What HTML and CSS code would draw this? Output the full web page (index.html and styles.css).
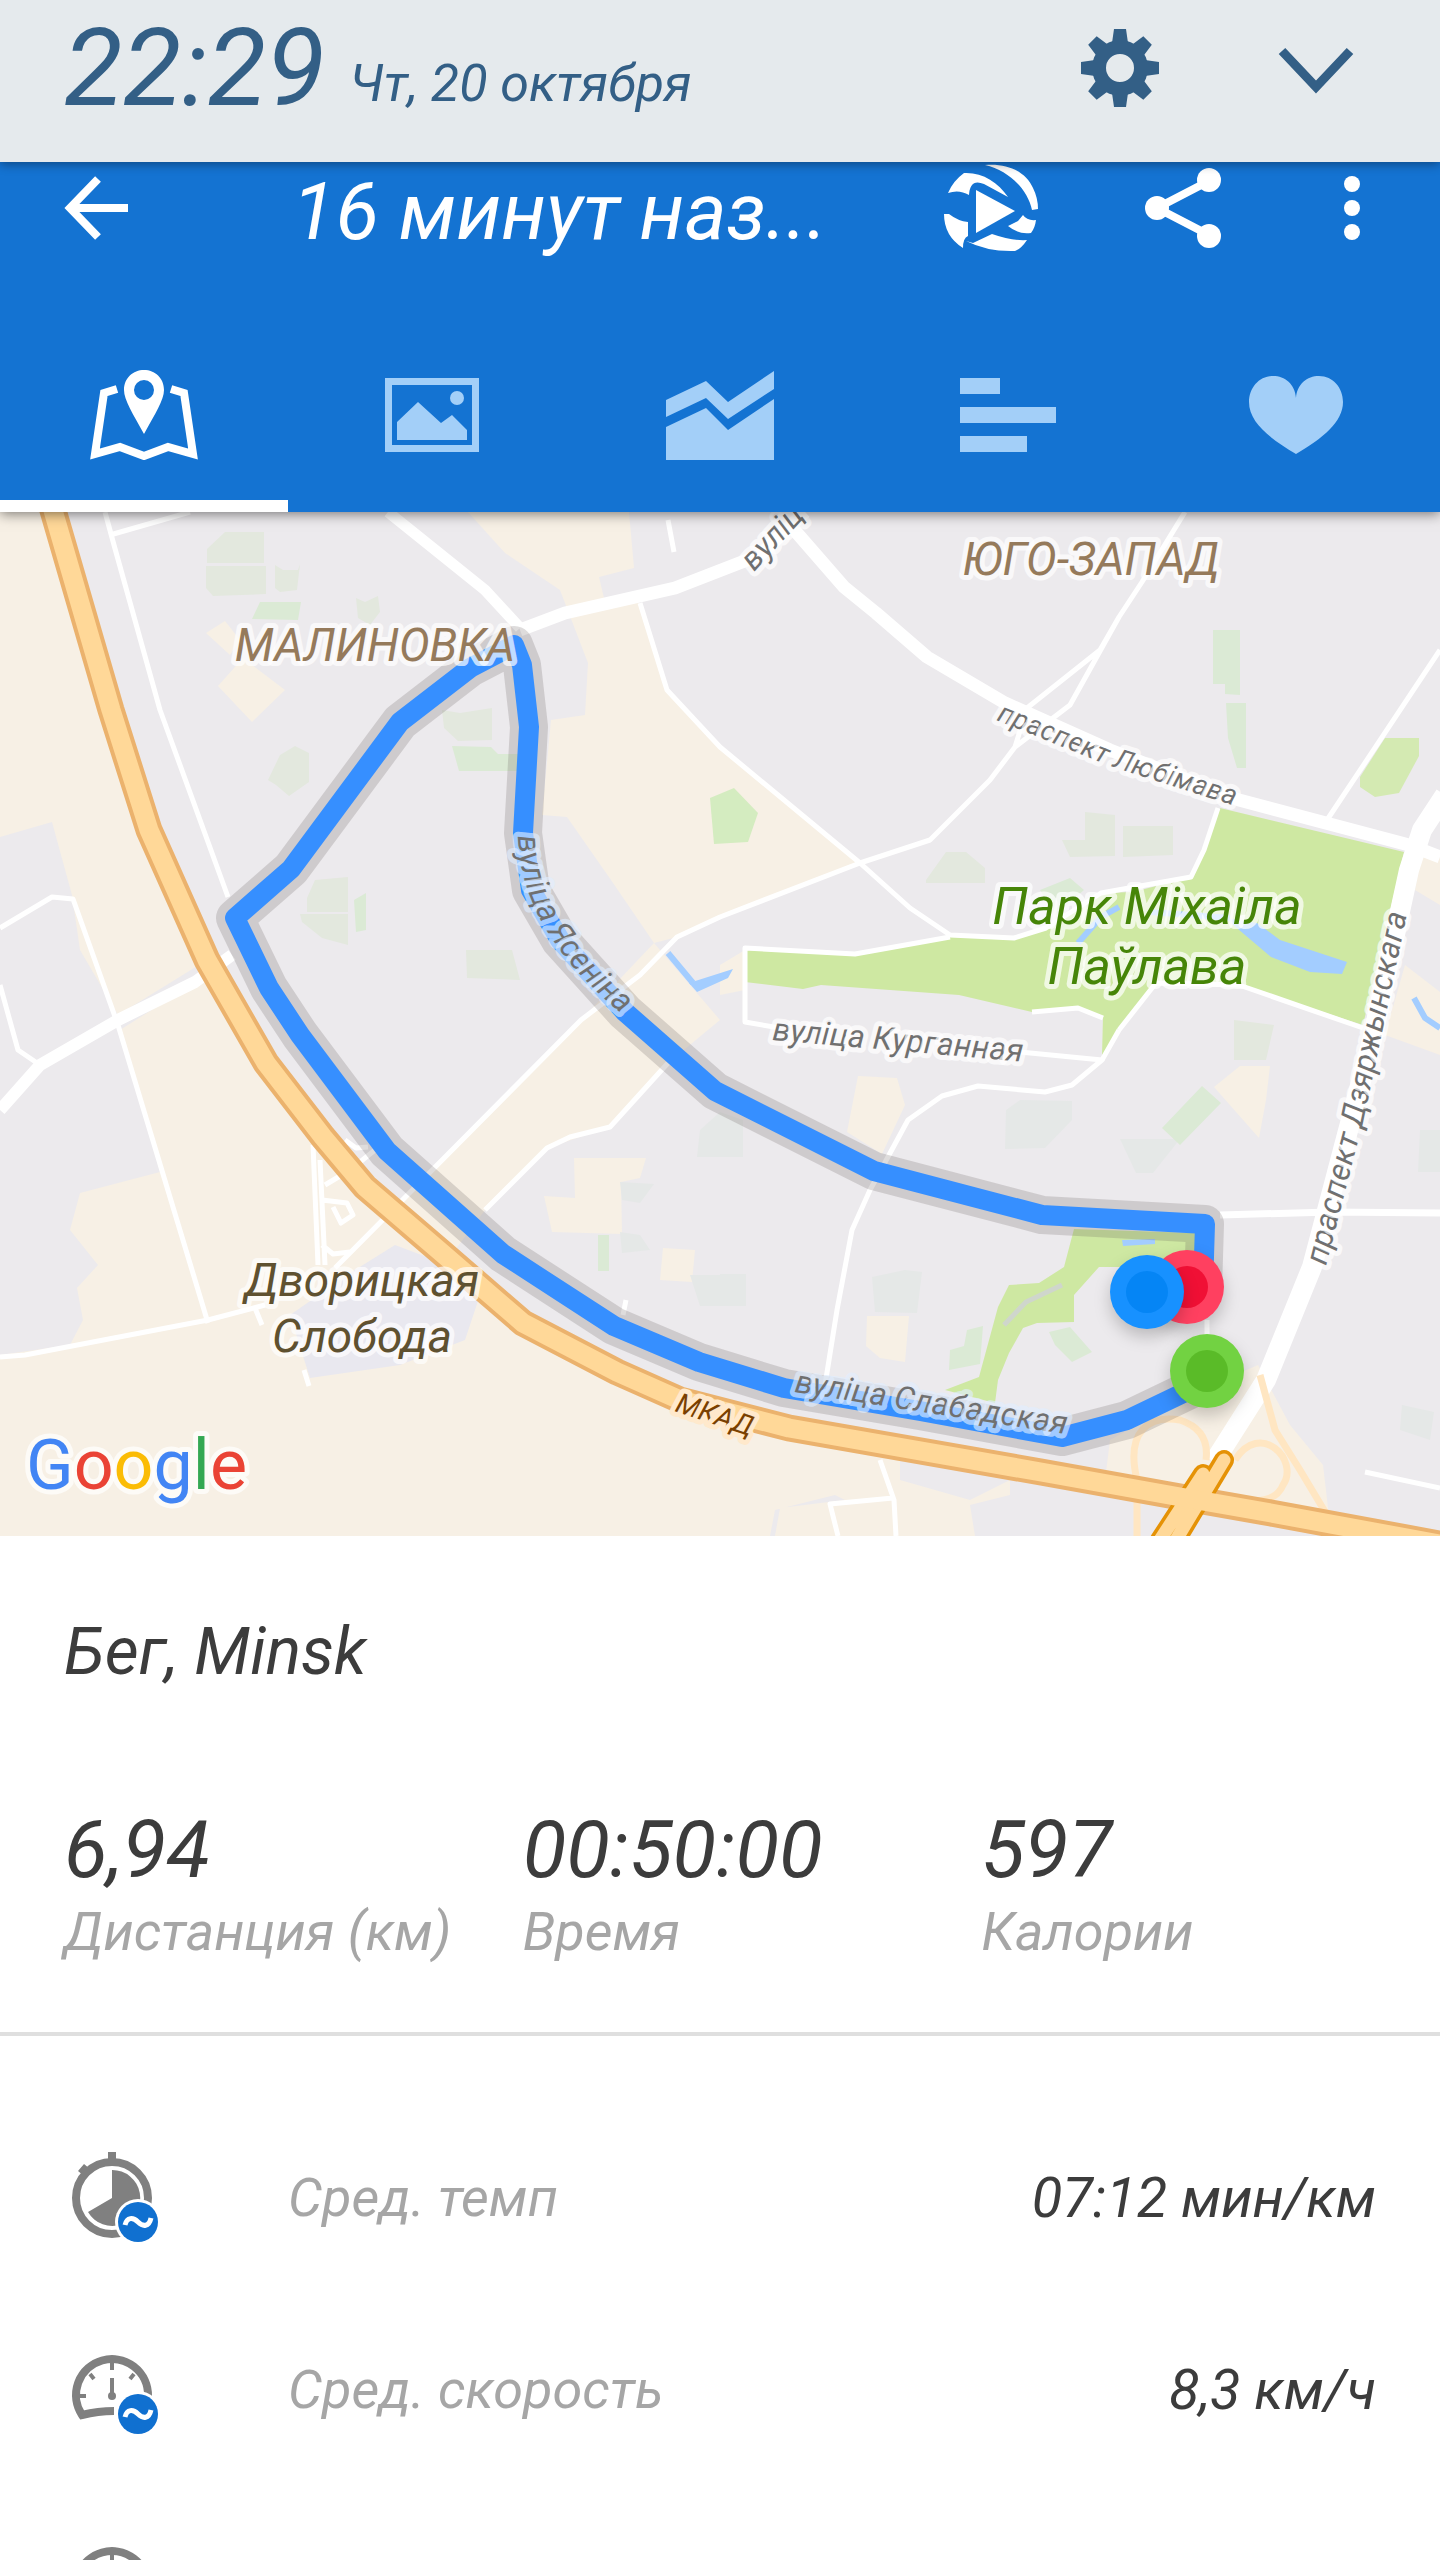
FILE: index.html
```html
<!DOCTYPE html>
<html lang="ru">
<head>
<meta charset="utf-8">
<meta name="viewport" content="width=device-width, initial-scale=1">
<title>Бег, Minsk</title>
<link rel="stylesheet" href="styles.css">
</head>
<body>
<div class="screen">
  <header class="status">
    <time class="clock">22:29</time>
    <span class="date">Чт, 20 октября</span>
    <button class="icon-btn gear" aria-label="Настройки">
      <svg width="80" height="80" viewBox="-40 -40 80 80" fill="currentColor">
        <path fill-rule="evenodd" d="M0-28a28 28 0 1 0 0 56a28 28 0 1 0 0-56zM0-14a14 14 0 1 1 0 28a14 14 0 1 1 0-28z"/>
        <g id="teeth"><path d="M-6-39H6L8-25H-8zM-6 39H6L8 25H-8zM-39-6V6L-25 8V-8zM39-6V6L25 8V-8z"/></g>
        <use href="#teeth" transform="rotate(45)"/>
      </svg>
    </button>
    <button class="icon-btn" aria-label="Развернуть">
      <svg width="76" height="56" viewBox="0 0 76 56" fill="none" stroke="currentColor" stroke-width="9"><path d="M4 11L38 47L72 11"/></svg>
    </button>
  </header>

  <nav class="appbar">
    <div class="toolbar">
      <button class="icon-btn back" aria-label="Назад">
        <svg width="64" height="64" viewBox="0 0 64 64" fill="none" stroke="currentColor" stroke-width="8"><path d="M64 32H6M34 3L6 32L34 61"/></svg>
      </button>
      <h1 class="title">16 минут наз...</h1>
      <button class="icon-btn replay" aria-label="Воспроизвести маршрут">
        <svg width="94" height="88" viewBox="0 0 94 88" fill="currentColor">
          <path d="M41 1C64-1 82 8 89 24Q94 34 94 45L88 46C84 26 66 7 41 1z"/>
          <path d="M4 29Q9 17 20 9C38 8 54 18 64 33L40 20Q26 14 25 31Q15 25 4 29z"/>
          <path d="M0 50H5Q14 57 24 58V72Q19 74 19 84Q0 72 0 50z"/>
          <path d="M22 77L29 79L48 70Q68 77 83 76Q77 85 71 87Q44 88 22 77z"/>
          <path d="M64 62L74 57L79 51Q83 57 92 56Q91 64 87 69Q75 71 64 62z"/>
          <path d="M32 26L71 47L32 69z"/>
        </svg>
      </button>
      <button class="icon-btn share" aria-label="Поделиться">
        <svg width="78" height="82" viewBox="0 0 78 82" fill="currentColor"><path d="M65 14L13 41L65 68" fill="none" stroke="currentColor" stroke-width="8"/><circle cx="65" cy="13" r="12"/><circle cx="13" cy="41" r="12"/><circle cx="65" cy="69" r="12"/></svg>
      </button>
      <button class="icon-btn more" aria-label="Ещё">
        <svg width="16" height="64" viewBox="0 0 16 64" fill="currentColor"><circle cx="8" cy="8" r="8"/><circle cx="8" cy="32" r="8"/><circle cx="8" cy="56" r="8"/></svg>
      </button>
    </div>
    <div class="tabs" role="tablist">
      <button class="tab active" role="tab" aria-selected="true" aria-label="Карта">
        <svg width="108" height="90" viewBox="0 0 108 90"><path d="M27 19L14 23L5 84L30 77L54 86L78 77L103 84L94 23L81 19" fill="none" stroke="currentColor" stroke-width="8"/><path fill="currentColor" fill-rule="evenodd" d="M54 0C65 0 74 8 74 20C74 30 65 44 54 64C43 44 34 30 34 20C34 8 43 0 54 0zM54 10a10 10 0 1 0 0 20a10 10 0 1 0 0-20z"/></svg>
      </button>
      <button class="tab" role="tab" aria-label="Фото">
        <svg width="94" height="74" viewBox="0 0 94 74" fill="currentColor"><path fill-rule="evenodd" d="M0 0H94V74H0zM7 7V67H87V7z"/><path d="M12 44L33 24L56 45L67 37L82 52V62H12z"/><circle cx="72" cy="20" r="7"/></svg>
      </button>
      <button class="tab" role="tab" aria-label="Графики">
        <svg width="108" height="90" viewBox="0 0 108 90" fill="currentColor"><path d="M0 30L40 11L62 32L108 1V19L62 49L40 28L0 47z"/><path d="M0 57L40 38L62 60L108 29V90H0z"/></svg>
      </button>
      <button class="tab" role="tab" aria-label="Круги">
        <svg width="96" height="74" viewBox="0 0 96 74" fill="currentColor"><path d="M0 0H40V16H0zM0 29H96V45H0zM0 58H67V74H0z"/></svg>
      </button>
      <button class="tab" role="tab" aria-label="Пульс">
        <svg width="94" height="78" viewBox="0 0 94 78" fill="currentColor"><path d="M47 22C46 8 36 0 24 0C10 0 0 12 0 26C0 46 20 62 47 78C74 62 94 46 94 26C94 12 84 0 70 0C58 0 48 8 47 22z"/></svg>
      </button>
    </div>
  </nav>

  <main>
    <svg class="map" viewBox="0 512 1440 1024" role="img" aria-label="Карта маршрута">
      <!-- land -->
      <g class="tan">
        <path d="M0 512H52L149 830L207 960L118 1015L80 950L72 895L52 822L0 837z"/>
        <path d="M120 1030L215 970L323 1137L442 1253L523 1323L680 1397L900 1450V1480L970 1500L1010 1480V1495L970 1505L975 1536H775L780 1508L845 1500L835 1495L775 1510L770 1536H0V1355L70 1345L83 1320L77 1288L98 1265L70 1230L80 1193L160 1172z"/>
        <path d="M468 512H629L634 568L599 577L604 598L640 603L666 690L720 747L858 862L720 917L677 937L654 943L611 880L567 817L542 815L551 720L585 715L588 663L560 590L505 553z"/>
        <path d="M581 1020L654 943L690 985L720 1020L668 1063L610 1127L547 1148L485 1210L440 1270L335 1268z"/>
        <path d="M1422 850L1440 858V905L1415 890zM1405 965L1440 992V1055L1385 1035zM745 950V990L720 995V965z"/>
        <path d="M858 1076L897 1078L905 1105L882 1154L847 1132zM1240 1066H1270L1266 1100L1259 1138L1214 1087zM867 1316H909L905 1362L880 1358L866 1346z"/>
        <path d="M574 1158H646L640 1178L621 1182L622 1234L552 1232L544 1196L575 1198zM663 1248L695 1250L692 1282L660 1280zM218 686L243 658L285 690L252 722zM206 633L225 621L240 640L230 655zM1210 832L1214 834L1206 858L1200 856z"/>
        <path d="M1258 1365L1290 1425L1323 1465L1330 1525L1270 1505L1105 1480L1110 1440L1200 1390z"/>
      </g>
      <path fill="#e9e8ef" d="M290 1315L355 1270L395 1245L440 1262L480 1295L465 1340L400 1365L310 1378z"/>
      <g fill="#e3e8de">
        <path d="M207 549L225 532H264V563H207zM206 566H266V594L213 596L206 588zM275 565L283 570H298L300 564L297 590L280 592L275 588z"/>
        <path d="M268 780L280 755L295 746L309 753V782L289 796L276 785zM442 710L460 713L492 708V740L458 741L444 728zM307 898L315 880L348 877V912H307zM300 914H348V945L322 938L302 922zM466 950H512L520 980L467 978zM356 598L365 602L378 596L380 612L370 625L358 618z"/>
        <path d="M926 880L946 852H966L985 868V883H926zM1062 840H1085V812L1115 815V856L1070 857zM1123 826H1173V855L1123 857zM1234 1020L1274 1025L1266 1060H1234z"/>
        <path fill="#e5e8e7" d="M1006 1110L1020 1100L1072 1101V1120L1045 1148L1005 1149zM1120 1139H1180L1153 1173H1136zM872 1277L905 1270L922 1272L917 1313L875 1312zM1402 1405L1434 1412L1430 1440L1400 1430zM620 1182L654 1184L640 1203L622 1200zM620 1232L640 1235L650 1250L622 1253zM690 1275H730V1306H700zM720 1274H746V1306H720zM1420 1130H1440V1172H1418zM700 1130L720 1112L743 1120V1157H697z"/>
      </g>
      <g fill="#dbead5">
        <path d="M260 602H301L298 620L252 619zM452 746L491 747L498 754H520L517 771H459zM354 900L366 893V930L356 932zM1213 630H1240V695L1225 694V684H1213zM1226 703H1246V768H1237L1228 738zM598 1235H609V1271H598zM1202 1086L1221 1103L1180 1145L1162 1128zM1049 1332L1070 1327L1092 1352L1072 1362L1055 1345zM967 1330L983 1326L980 1364L949 1370L950 1350L964 1346zM1040 890L1070 878L1084 890L1055 915z"/>
      </g>
      <path fill="#d4ecc0" d="M710 798L734 788L758 813L748 842L714 844z"/>
      <path fill="#d4eab2" d="M1385 738H1419V756L1399 793L1375 797L1360 787V777z"/>
      <path fill="#cee8a2" d="M1220 808L1404 852L1363 1025L1239 985L1156 983L1119 1030L1102 1056L1103 1016L1078 1008L1032 1012L959 995L821 985L803 989L745 982V950L855 954L950 937L1014 938L1046 928L1101 893L1133 892L1191 877L1204 850z"/>
      <path fill="#cee8a2" d="M1074 1229L1195 1233V1267H1099L1074 1295V1322L1037 1323L1023 1328L1009 1353L998 1380L995 1403L945 1390L979 1377L998 1307L1009 1285L1039 1283L1064 1267z"/>
      <path fill="#a3cdff" d="M1225 918L1257 923L1280 940L1347 962L1342 974L1310 972L1271 957zM689 983L733 969L728 978L697 992zM1122 1240L1155 1239V1244L1123 1246z"/>
      <path fill="none" stroke="#a3cdff" stroke-width="6" d="M1078 943L1101 917L1119 907M1150 912L1230 918M668 953L693 983M1414 998L1425 1018L1440 1028"/>
      <path fill="none" stroke="#cfd6cc" stroke-width="5" d="M1004 1325L1026 1302L1062 1285"/>

      <!-- streets -->
      <g class="street thin">
        <path d="M105 512L114 545L160 710L228 897M110 535L190 512M0 928L52 897L73 899L118 1025L208 1323M0 985L18 1050L40 1065M0 1357L25 1355L208 1320L265 1305"/>
        <path d="M668 520L674 552M640 603L667 690L720 747L860 863L910 908L950 935L1014 938L1046 928L1101 893L1191 877L1204 850L1218 808"/>
        <path d="M1185 512L1142 582L1119 617L1070 705L1015 747M1119 617L1100 650L1027 708L1015 747L990 780L930 840L860 863L720 917L677 937L640 975L581 1020L335 1268M1327 820L1440 650"/>
        <path d="M950 937L855 954L745 948V1022L780 1028M1020 1052L1102 1060L1072 1085L1045 1092L978 1086L942 1096L908 1120L870 1190L852 1230L837 1310L825 1385"/>
        <path d="M1119 1030L1156 983L1239 985L1363 1028M1119 1030L1102 1060M1032 1012L1078 1008L1103 1018M668 1063L610 1127L570 1137L547 1148L485 1210M626 1300L623 1315M880 1460L894 1500L896 1536M838 1536L830 1504L893 1498M1365 1472L1440 1488M1207 1320V1345"/>
        <path d="M313 1145L318 1265M320 1160L325 1265M345 1140L356 1148L368 1147M375 1150L350 1170L325 1185M322 1200L347 1203L353 1215L341 1223L333 1207M322 1245L333 1254L350 1252M255 1308L262 1325M304 1370L309 1386"/>
      </g>
      <g class="street wide">
        <path d="M0 1110L40 1065L118 1020L195 982L232 955" stroke-width="12"/>
        <path d="M388 512L485 590L520 628" stroke-width="11"/>
        <path d="M520 630L565 613L675 588L760 555L805 512" stroke-width="13"/>
        <path d="M790 525L844 587L876 613L927 657L1005 703L1110 750L1239 800L1409 845L1440 857" stroke-width="13"/>
        <path d="M1220 1215L1330 1212L1440 1213" stroke-width="7"/>
        <path d="M1445 795L1422 830L1409 870L1372 1040L1335 1180L1312 1267L1266 1380L1214 1462" stroke-width="20"/>
      </g>

      <!-- ring road and junction -->
      <path class="loops" d="M1260 1375L1275 1430L1300 1470L1330 1520M1137 1536V1480C1125 1430 1150 1415 1180 1420Q1210 1430 1206 1460M1235 1460C1260 1420 1300 1460 1283 1485Q1275 1505 1240 1500"/>
      <path class="ring-edge" d="M50 500L111 710L149 830L207 960L266 1063L323 1137L365 1187L442 1253L523 1323L617 1372L680 1400L789 1428L1041 1472L1197 1500L1271 1513L1450 1546"/>
      <path class="junction-edge" d="M1224 1460L1170 1550M1203 1474L1160 1540"/>
      <path class="junction" d="M1224 1460L1170 1550M1203 1474L1160 1540"/>
      <path class="ring" d="M50 500L111 710L149 830L207 960L266 1063L323 1137L365 1187L442 1253L523 1323L617 1372L680 1400L789 1428L1041 1472L1197 1500L1271 1513L1450 1546"/>

      <!-- run track -->
      <g class="track">
        <path id="track" d="M1203 1290L1205 1224L1042 1215L874 1171L715 1091L625 1012L560 940L531 890L523 833L529 727L522 665L514 645L470 668L400 722L291 869L235 918L269 988L300 1035L387 1151L503 1254L614 1326L699 1362L784 1388L920 1411L1062 1437L1127 1420L1200 1385"/>
        <use href="#track" class="track-line"/>
      </g>

      <!-- labels -->
      <defs>
        <path id="p1" d="M754 572L830 490"/>
        <path id="p2" d="M996 720L1110 766L1260 814"/>
        <path id="p3" d="M1326 1266L1364 1118L1410 900"/>
        <path id="p4" d="M772 1040L1050 1064"/>
        <path id="p5" d="M518 836Q520 930 622 1014L650 1036"/>
        <path id="p6" d="M794 1392L1090 1438"/>
        <path id="p7" d="M674 1411L770 1443"/>
      </defs>
      <g class="label road">
        <text><textPath href="#p1">вуліц</textPath></text>
        <text class="small"><textPath href="#p2">праспект Любімава</textPath></text>
        <text><textPath href="#p3">праспект Дзяржынскага</textPath></text>
        <text><textPath href="#p4">вуліца Курганная</textPath></text>
        <text class="over"><textPath href="#p5">вуліца Ясеніна</textPath></text>
        <text class="over"><textPath href="#p6">вуліца Слабадская</textPath></text>
        <text class="ring-name small"><textPath href="#p7">МКАД</textPath></text>
      </g>
      <g class="label district">
        <text x="375" y="661">МАЛИНОВКА</text>
        <text x="1091" y="575">ЮГО-ЗАПАД</text>
      </g>
      <g class="label park">
        <text x="1147" y="924">Парк Міхаіла</text>
        <text x="1147" y="984">Паўлава</text>
      </g>
      <g class="label village">
        <text x="362" y="1296">Дворицкая</text>
        <text x="362" y="1352">Слобода</text>
      </g>
      <text class="label google" x="26" y="1489"><tspan fill="#4285f4">G</tspan><tspan fill="#ea4335">o</tspan><tspan fill="#fbbc05">o</tspan><tspan fill="#4285f4">g</tspan><tspan fill="#34a853">l</tspan><tspan fill="#ea4335">e</tspan></text>

      <!-- markers -->
      <g class="pin"><circle cx="1187" cy="1287" r="37" fill="#ff4060"/><circle cx="1187" cy="1287" r="21" fill="#f01035"/></g>
      <g class="pin"><circle cx="1147" cy="1292" r="37" fill="#1791ff"/><circle cx="1147" cy="1292" r="21" fill="#0585f5"/></g>
      <g class="pin"><circle cx="1207" cy="1371" r="37" fill="#72d242"/><circle cx="1207" cy="1371" r="21" fill="#5abb28"/></g>
    </svg>

    <section class="summary">
      <h2 class="workout">Бег, Minsk</h2>
      <dl class="totals">
        <div class="total"><dd>6,94</dd><dt>Дистанция (км)</dt></div>
        <div class="total"><dd>00:50:00</dd><dt>Время</dt></div>
        <div class="total"><dd>597</dd><dt>Калории</dt></div>
      </dl>
    </section>

    <ul class="stats">
      <li class="stat">
        <svg width="96" height="96" viewBox="0 0 96 96">
          <circle cx="48" cy="48" r="36" fill="none" stroke="#808080" stroke-width="8"/>
          <path fill="#808080" d="M44 2H52V10H44zM14 21L20 14L26 19L20 26zM48 48V20A28 28 0 1 1 24 62z"/>
          <g id="badge"><circle cx="74" cy="72" r="23" fill="#fff"/><circle cx="74" cy="72" r="20" fill="#1070d0"/><path d="M61 75C63 67 69 67 74 72S85 77 87 68" fill="none" stroke="#fff" stroke-width="5"/></g>
        </svg>
        <span class="name">Сред. темп</span>
        <span class="value">07:12 мин/км</span>
      </li>
      <li class="stat">
        <svg width="96" height="96" viewBox="0 0 96 96">
          <g id="gauge"><path d="M50 69Q34 69 18 73A36 36 0 1 1 84 54" fill="none" stroke="#808080" stroke-width="8"/>
          <path d="M48 20V28M26 32L30 37M70 32L66 37M14 54H22" stroke="#808080" stroke-width="4"/>
          <path d="M48 36V54" stroke="#808080" stroke-width="4"/><circle cx="48" cy="54" r="4" fill="#808080"/></g>
          <use href="#badge"/>
        </svg>
        <span class="name">Сред. скорость</span>
        <span class="value">8,3 км/ч</span>
      </li>
      <li class="stat">
        <svg width="96" height="96" viewBox="0 0 96 96"><use href="#gauge"/></svg>
      </li>
    </ul>
  </main>
</div>
</body>
</html>
```
FILE: styles.css
```css
* { box-sizing: border-box; margin: 0; padding: 0; }

body {
  font-family: Roboto, "Noto Sans", "Liberation Sans", sans-serif;
  font-style: italic;
  background: #fff;
  color: #3c3c3c;
}

.screen {
  height: 100vh;
  overflow: hidden;
  display: flex;
  flex-direction: column;
}

.icon-btn, .tab {
  display: flex;
  align-items: center;
  justify-content: center;
  flex: none;
  border: 0;
  background: none;
  color: inherit;
  cursor: pointer;
}

svg { display: block; flex: none; }

.status {
  position: relative;
  z-index: 3;
  flex: none;
  display: flex;
  align-items: center;
  height: 162px;
  padding: 0 86px 26px 64px;
  background: #e5eaed;
  color: #335f86;
  box-shadow: 0 2px 10px rgba(0, 0, 0, .4);
}
.clock { font-size: 108px; line-height: 120px; }
.date { font-size: 52px; line-height: 60px; margin-left: 24px; padding-top: 32px; }
.gear { margin-left: auto; margin-right: 118px; }

.appbar {
  position: relative;
  z-index: 2;
  flex: none;
  background: #1473d2;
  color: #fff;
  box-shadow: 0 2px 12px rgba(0, 0, 0, .5);
}
.toolbar {
  display: flex;
  align-items: center;
  height: 92px;
  padding: 0 80px 0 64px;
}
.title {
  flex: 1;
  padding: 8px 0 0 164px;
  font-size: 80px;
  line-height: 92px;
  font-weight: 400;
  white-space: nowrap;
}
.share { margin: 0 122px 0 106px; }

.tabs {
  display: grid;
  grid-template-columns: repeat(5, 1fr);
  margin-top: 64px;
}
.tab {
  height: 194px;
  color: #a3cff8;
  border-top: 12px solid transparent;
  border-bottom: 12px solid transparent;
}
.tab.active { color: #fff; border-bottom-color: #fff; }

.map { width: 100%; height: auto; background: #eceaed; }
.tan { fill: #f7f0e5; }
.street path { fill: none; stroke: #fff; stroke-linejoin: round; }
.thin path { stroke-width: 5; }
.loops { fill: none; stroke: #ffe6c2; stroke-width: 7; }
.ring-edge, .ring, .junction, .junction-edge { fill: none; stroke-linejoin: round; stroke-linecap: round; }
.ring-edge { stroke: #ebb26d; stroke-width: 27; }
.ring { stroke: #ffd898; stroke-width: 19; }
.junction-edge { stroke: #e59206; stroke-width: 20; }
.junction { stroke: #ffd898; stroke-width: 13; }
.track {
  fill: none;
  stroke: rgba(90, 80, 80, .2);
  stroke-width: 38;
  stroke-linejoin: round;
}
.track-line { stroke: #368fff; stroke-width: 20; }

.label {
  paint-order: stroke;
  stroke: rgba(255, 255, 255, .7);
  stroke-width: 10px;
  stroke-linejoin: round;
}
.road { font-size: 32px; fill: #707070; }
.small { font-size: 28px; }
.over { stroke: rgba(225, 238, 255, .65); }
.ring-name { fill: #7a4000; stroke: #ffe9cc; }
.district { font-size: 46px; fill: #957a5b; text-anchor: middle; }
.park { font-size: 52px; fill: #468508; text-anchor: middle; }
.village { font-size: 46px; fill: #5f5130; text-anchor: middle; }
.google { font-size: 70px; font-style: normal; }
.pin { filter: drop-shadow(0 8px 8px rgba(0, 0, 0, .2)); }

main { flex: 1; min-height: 0; overflow: hidden; }

.summary {
  padding: 80px 64px 64px;
  border-bottom: 4px solid #dfdfdf;
}
.workout { font-size: 66px; line-height: 72px; font-weight: 400; }
.totals {
  display: grid;
  grid-template-columns: repeat(3, 1fr);
  column-gap: 64px;
  margin-top: 112px;
}
.total { white-space: nowrap; }
.total dd { font-size: 80px; line-height: 100px; }
.total dt { font-size: 54px; line-height: 64px; padding-bottom: 4px; color: #a6a6a6; }

.stats { list-style: none; padding-top: 66px; }
.stat {
  display: flex;
  align-items: center;
  height: 192px;
  padding: 0 64px;
}
.name { margin-left: 128px; font-size: 54px; line-height: 64px; color: #a6a6a6; }
.value { margin-left: auto; font-size: 56px; line-height: 64px; }
```
